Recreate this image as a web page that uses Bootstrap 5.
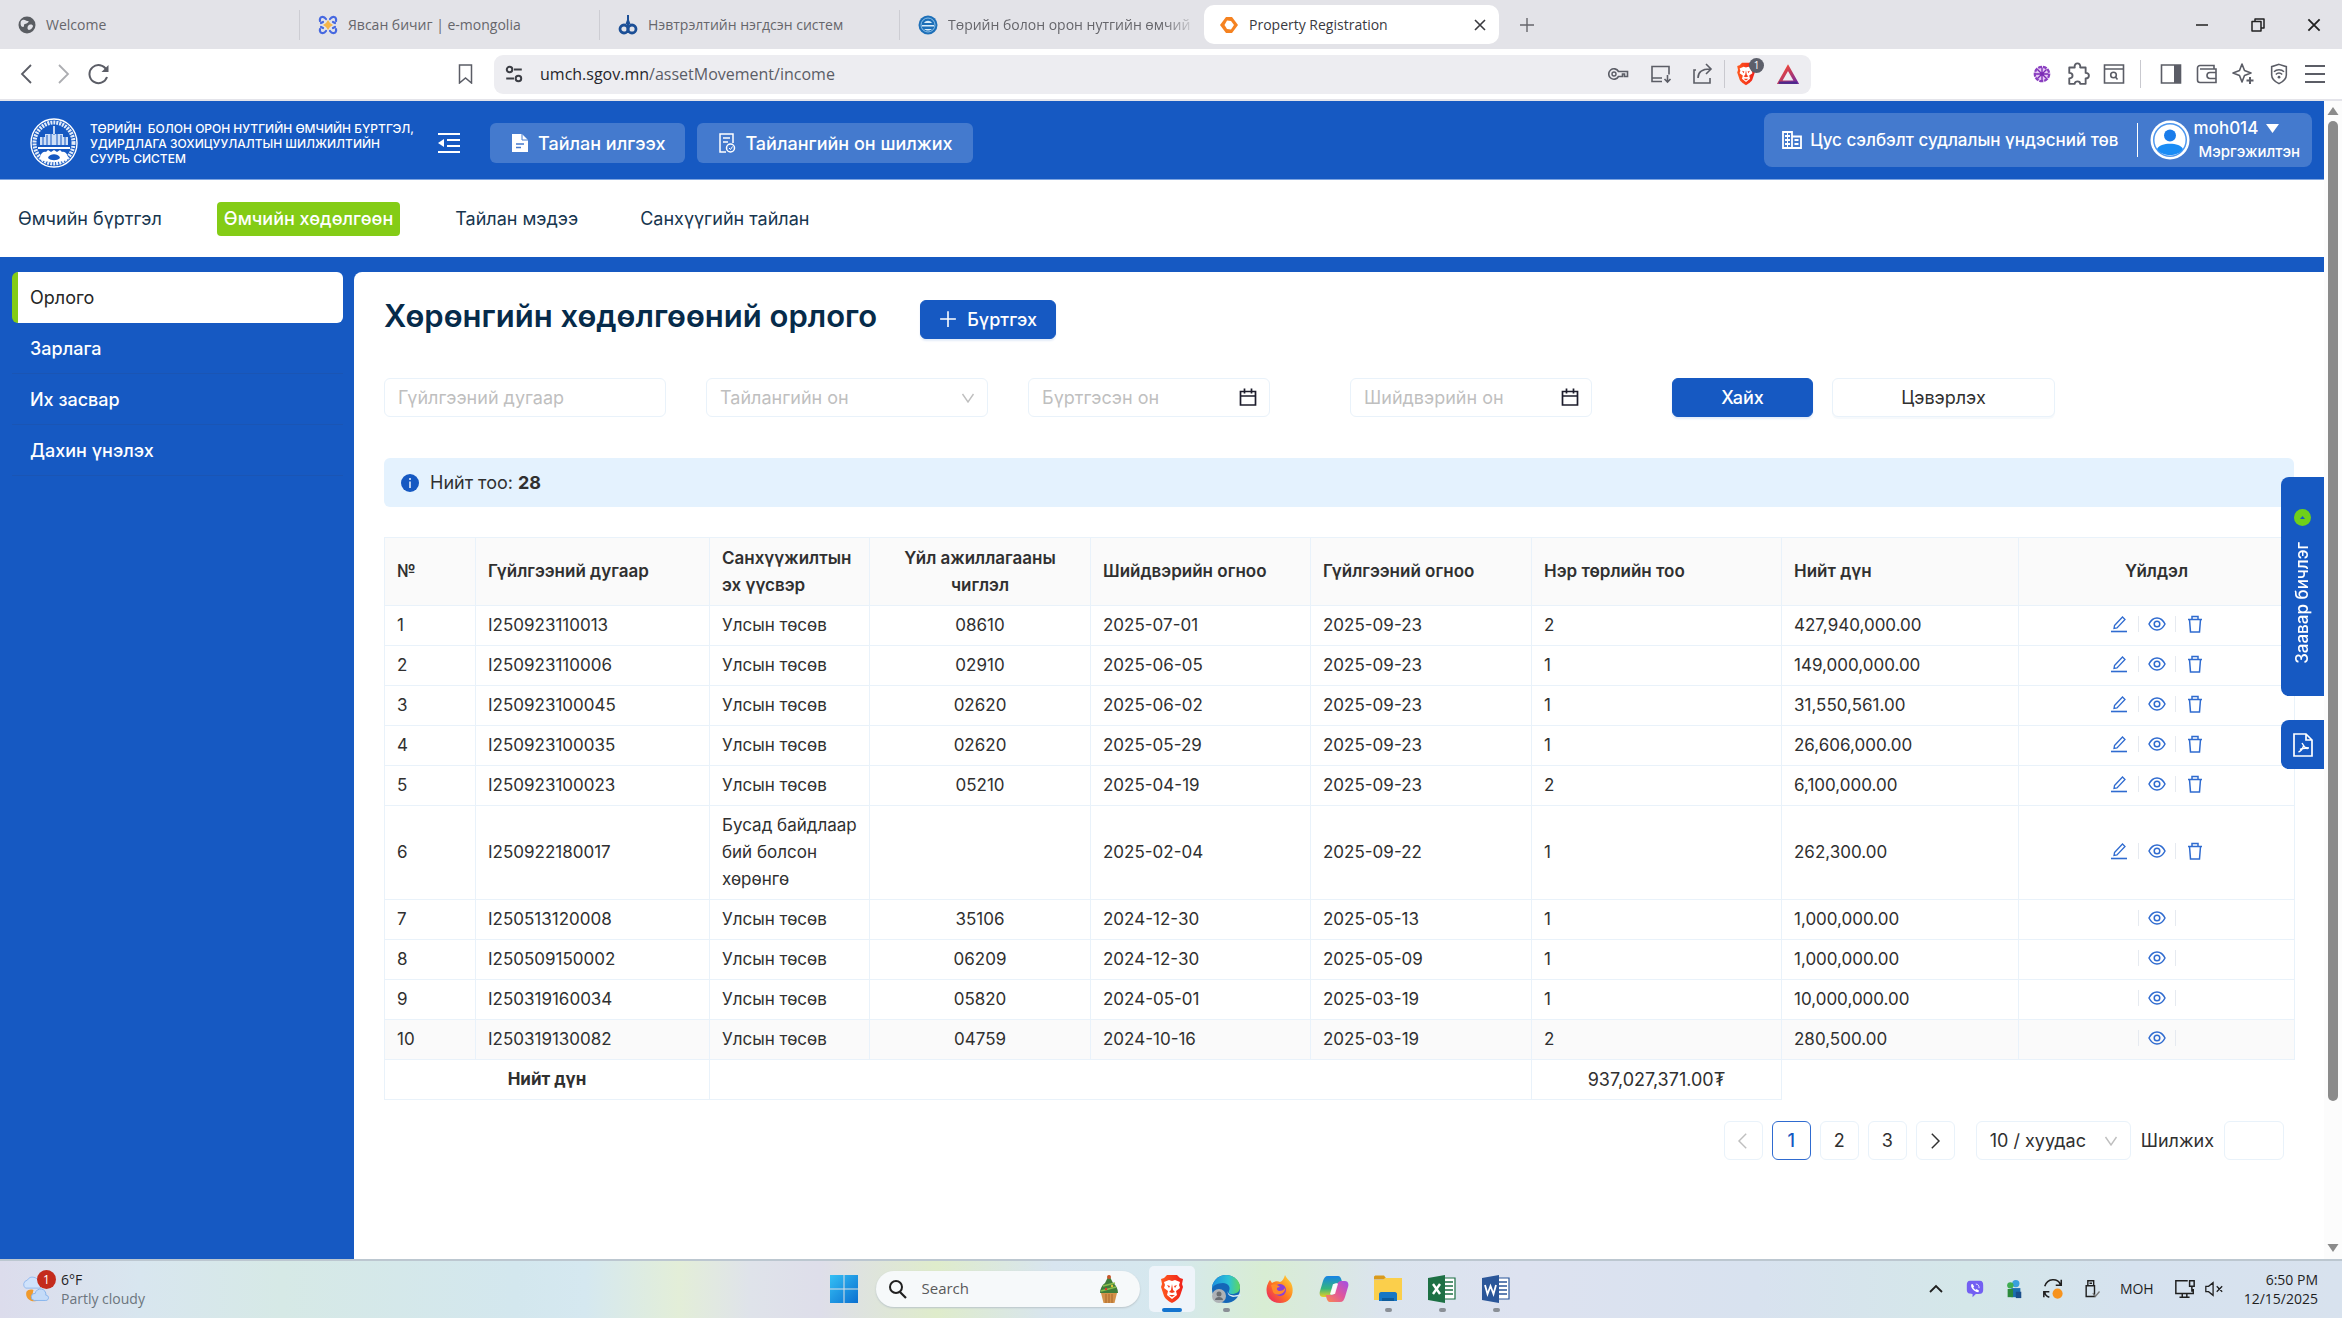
<!DOCTYPE html>
<html lang="mn">
<head>
<meta charset="utf-8">
<meta name="viewport" content="width=device-width, initial-scale=1">
<title>Property Registration</title>
<link href="https://cdn.jsdelivr.net/npm/bootstrap@5.3.0/dist/css/bootstrap.min.css" rel="stylesheet">
<style>
:root{--brand:#1659c2;--line:#e9f2fa;--lime:#84cc16;--os:"Open Sans","Noto Sans",sans-serif}
body{font-family:Inter,"Noto Sans",sans-serif;font-size:17px;line-height:27px;color:#303030;background:#fff;overflow:hidden}
svg{display:block;flex:none}
a{text-decoration:none;color:inherit}
.i16{width:16px;height:16px}.i18{width:18px;height:18px}.i20{width:20px;height:20px}.i22{width:22px;height:22px}.i24{width:24px;height:24px}.i30{width:30px;height:30px}
.plain{border:0;background:none;padding:0;color:inherit;display:flex;align-items:center;justify-content:center}
/* browser frame */
.tabstrip{height:49px;background:#e3e3e8;font-family:var(--os);font-size:14px;color:#66666b}
.tabitem{width:300px;height:30px;padding-left:18px;gap:10px;position:relative;border-right:1px solid #cdcdd3;white-space:nowrap}
.tabitem.nosep{border-right:0}
.tabitem.fadeout a{-webkit-mask-image:linear-gradient(90deg,#000 215px,transparent 250px);mask-image:linear-gradient(90deg,#000 215px,transparent 250px)}
.tabitem.current{width:295px;height:39px;background:#fff;border-radius:10px;border:0;color:#3a3a3f;margin-left:4px;padding:0 8px 0 15px}
.winbtn{width:56px;height:48px;color:#222}
.toolbar{height:52px;background:#fff;border-bottom:2px solid #e4e4ea;color:#5b5d66}
.tool-left{width:494px;padding:0 10px 0 9px}
.cell36{width:36px;height:40px}.cell42{width:42px;height:39px}
.tool-right{width:531px;padding-right:9px}
.urlbar{height:39px;background:#ededf1;border-radius:9px;font-family:var(--os);font-size:16px;color:#5b5d66;padding:0 2px 0 10px}
.urlbar b{font-weight:400;color:#26262b}
.vsep{width:1px;height:28px;background:#c9c9cf}
.shieldcount{position:absolute;left:24px;top:3px;width:15px;height:15px;border-radius:8px;background:#5c5f6a;color:#fff;font-size:10px;line-height:15px;text-align:center}
/* application */
.app{background:#fff;min-width:0}
.apphead{height:79px;background:var(--brand);color:#fff;padding:0 12px 0 30px;border-bottom:1px solid #7fa5e0}
.headleft{padding-top:6px}
.brandname{font-size:12px;line-height:15px;font-weight:500;margin-left:12px;width:347px}
.headbtn{height:40px;background:rgba(255,255,255,.2);border:0;border-radius:6px;color:#fff;font-size:18px;font-weight:500;padding:0 20px;gap:8px;display:flex;align-items:center}
.headbtn:first-of-type{margin-left:0}
.headgap{width:29px}
.orgbox{height:54px;background:rgba(255,255,255,.2);border-radius:8px;padding:0 12px 0 18px;font-weight:500}
.orgbox .orgline{width:1px;height:34px;background:#fff;margin:0 12px 0 18px}
.username{font-size:17px;line-height:24px}.userrole{font-size:15px;line-height:24px;padding-left:5px}
.mainnav{height:77px;color:#17364f;padding-left:11px;font-size:18px}
.mainnav a{padding:3px 7px;border-radius:4px;height:34px;line-height:28px}
.mainnav a.current{background:var(--lime);color:#fff;font-weight:500}
.shell{background:var(--brand);padding-top:15px}
.side{width:354px;padding:0 11px 0 12px;color:#fff;font-weight:500;font-size:18px}
.side a{display:block;height:51px;line-height:52px;padding-left:18px;border-bottom:1px solid #1a55b4}
.side a.current{background:#fff;color:#262626;font-weight:400;border:0;border-left:6px solid var(--lime);padding-left:12px;border-radius:6px}
.panel{background:#fff;border-top-left-radius:8px;padding:27px 30px 0;min-width:0;font-size:18px}
.pagetitle{font-size:31px;line-height:34px;font-weight:600;color:#062b4a;margin:0 43px 6px 0}
.btn-brand{--bs-btn-bg:#1659c2;--bs-btn-border-color:#1659c2;--bs-btn-color:#fff;--bs-btn-hover-bg:#0f4cab;--bs-btn-hover-color:#fff;box-shadow:0 2px 2px #e4ecf8}
.btn-quiet{--bs-btn-bg:#fff;--bs-btn-border-color:#e9f2fa;--bs-btn-color:#303030;box-shadow:0 2px 1px #f6f9fc}
.panel .btn{height:39px;padding:0 18px;font-size:18px;line-height:27px;border-radius:6px;font-weight:500}
.panel .btn-quiet{font-weight:400}
.addbtn{gap:10px}
.filters{margin-top:39px}
.panel .form-control,.panel .form-select{height:39px;font-size:18px;line-height:27px;border:1px solid var(--line);border-radius:6px;padding:0 13px;color:#303030;background-color:#fff}
.panel .form-control::placeholder{color:#bfbfbf}
.panel .form-select{background-image:url("data:image/svg+xml,%3Csvg xmlns='http://www.w3.org/2000/svg' viewBox='0 0 14 12'%3E%3Cpath d='M1.500 2l5.500 8 5.500-8' fill='none' stroke='%23bfbfbf' stroke-width='1.400'/%3E%3C/svg%3E");background-size:14px 12px;background-position:right 12px center}
.panel .form-select.ghost{color:#bfbfbf}
.w-field{width:282px}.w-date{width:242px}
.gap-a{margin-left:40px}.gap-b{margin-left:80px}
.w-find{width:141px}.w-clear{width:223px;margin-left:19px}
.calico{position:absolute;right:13px;top:10px;color:#1c1c2b;pointer-events:none}
.countbar{margin-top:41px;height:49px;background:#e4f2fe;border-radius:6px;padding-left:17px;gap:11px}
.ledger{table-layout:fixed;margin:30px 0 0;font-size:17px;color:#303030;--bs-table-color:#303030;--bs-table-border-color:#e9f2fa}
.ledger>:not(caption),.ledger>:not(caption)>*{border:0}
.ledger>:not(caption)>*>*{padding:6px 12px;vertical-align:middle;border:1px solid var(--line)}
.ledger th{font-weight:600;background:#fafafa}
.ledger thead tr{height:68px}
.ledger tfoot>tr>td.void{border-width:1px 0 0 1px}
.ledger tr.hovered>td{background:#fafafa}
.c1{width:91px}.c2{width:234px}.c3{width:160px}.c4{width:221px}.c5{width:220px}.c6{width:221px}.c7{width:250px}.c8{width:237px}.c9{width:276px}
.sumcell{font-size:18px}
.acts{display:flex;justify-content:center;height:26px;align-items:center;color:#2f6bd0;padding-bottom:3px}
.acts .slot{width:38px;display:flex;justify-content:center}
.acts .slot.mid{border-left:1px solid #e6eaf0;border-right:1px solid #e6eaf0;height:16px;align-items:center}
.pager{margin-top:21px;gap:10px;padding-right:10px}
.pager .pagination{gap:10px;margin-right:11px}
.pager .page-link{width:39px;height:39px;padding:0;border:1px solid var(--line);border-radius:6px;color:#303030;display:flex;align-items:center;justify-content:center;font-size:18px;margin:0}
.pager .active .page-link{border-color:#2f6bd0;color:#1659c2;background:#fff;font-weight:500}
.pager .disabled .page-link{color:#bfbfbf;background:#fff}
.panel .w-size{width:155px;padding-right:30px}.w-jump{width:60px}
.guide{position:absolute;right:0;top:220px;width:43px;height:219px;background:var(--brand);border-radius:8px 0 0 8px;color:#fff;font-weight:500;font-size:17px}
.guide span{writing-mode:vertical-rl;transform:rotate(180deg)}
.pdfbtn{position:absolute;right:0;top:463px;width:43px;height:49px;background:var(--brand);border-radius:8px 0 0 8px;color:#fff}
.scroller{flex:none;width:18px;background:#fcfcfc;padding:5px 0}
.scroller .thumb{width:10px;flex:979 0 0;background:#8b8b8b;border-radius:5px}
.scroller .rest{flex:141 0 0}
/* taskbar */
.taskbar{height:59px;border-top:2px solid #bcc7d0;padding-bottom:2px;font-family:var(--os);font-size:14px;line-height:19px;color:#1f1f1f;background:linear-gradient(90deg,#dcdcec 0,#d8e6ef 6%,#d6e9e6 12%,#d3e7ee 22%,#d5e8f0 25%,#e3eed8 29%,#dfe3ea 32%,#dedeea 35%,#dfeccb 40%,#d8e5f0 45%,#d5e8ee 50%,#d8edd3 54%,#dbe4ee 59%,#dde2f0 65%,#d8e2ef 75%,#d4e7e9 84%,#d6e2ef 91%,#d8e2ee 100%)}
.weather,.tray{flex:1 1 0}
.weather{padding-left:22px;gap:9px}
.alertdot{position:absolute;left:15px;top:-4px;width:19px;height:19px;border-radius:10px;background:#c42b1c;color:#fff;text-align:center;font-size:12px}
.dock{flex:none;padding-left:16px}
.searchpill{width:264px;height:36px;border-radius:18px;background:#f6f9fa;box-shadow:0 1px 2px #b9c4c9;padding:0 20px 0 12px;gap:12px;margin-left:18px;margin-right:9px}
.searchpill input{border:0;background:none;font-size:15px;width:150px;outline:0}
.searchpill input::placeholder{color:#5a5a5a}
.appbtn{width:46px;height:46px;position:relative;margin-right:8px;border-radius:5px}
.appbtn.front{background:#eef4fa}
.appbtn::after{content:"";position:absolute;left:20px;bottom:0;width:7px;height:4px;border-radius:2px;background:#8a8f96}
.appbtn.front::after{left:13px;width:20px;background:#1374cf}
.appbtn.idle::after{display:none}
.excel{color:#1d7044}.word{color:#2a5699}
.tray{padding-right:24px}
.tray .cell{width:39px;display:flex;justify-content:center}
.langtag{margin:0 20px 0 8px}.muteico{margin-right:20px}
</style>
</head>
<body class="d-flex flex-column vh-100">
<svg width="0" height="0" class="position-absolute" aria-hidden="true">
<defs>
<linearGradient id="gWin" x1="0" y1="0" x2="1" y2="1"><stop offset="0" stop-color="#35c0f5"/><stop offset="1" stop-color="#0a6fd0"/></linearGradient>
<linearGradient id="gBrave" x1="0" y1="0" x2="1" y2="0"><stop offset="0" stop-color="#ff5a1f"/><stop offset="1" stop-color="#f0201a"/></linearGradient>
<linearGradient id="gEdge" x1="0" y1="0" x2="1" y2="0"><stop offset="0" stop-color="#1b8fe0"/><stop offset=".6" stop-color="#2cc3d5"/><stop offset="1" stop-color="#5fd65c"/></linearGradient>
<linearGradient id="gFox" x1="1" y1="0" x2="0" y2="1"><stop offset="0" stop-color="#ffe03a"/><stop offset=".5" stop-color="#ff7a1e"/><stop offset="1" stop-color="#e8186e"/></linearGradient>
<linearGradient id="gCop" x1="0" y1="0" x2="0" y2="1"><stop offset="0" stop-color="#1683e6"/><stop offset=".6" stop-color="#35b57e"/><stop offset="1" stop-color="#e8d122"/></linearGradient>
<linearGradient id="gCop2" x1="1" y1="0" x2="0" y2="1"><stop offset="0" stop-color="#a04fe8"/><stop offset=".5" stop-color="#e0559c"/><stop offset="1" stop-color="#fb8c4c"/></linearGradient>
<linearGradient id="gTri" x1="0" y1="0" x2="1" y2="1"><stop offset="0" stop-color="#ff4a2a"/><stop offset="1" stop-color="#7a2a9c"/></linearGradient>
</defs>
<symbol id="globe" viewBox="0 0 18 18"><circle cx="9" cy="9" r="8.500" fill="#5a5d62"/><path d="M3 5c3-3 5 0 7 0s-1 3-3 3 0 3-2 3-3-3-2-6zm8 4c2-1 4 0 4 1s-2 4-4 4-2-4 0-5z" fill="#e3e3e8"/></symbol>
<symbol id="emon" viewBox="0 0 20 20"><g fill="none" stroke="#4668e0" stroke-width="2.200" stroke-linecap="round"><path d="M2 6c-1-5 4-5 6-2M12 4c2-3 7-3 6 2M2 14c-1 5 4 5 6 2M12 16c2 3 7 3 6-2"/><path d="M3 8l2-1M17 8l-2-1M3 12l2 1M17 12l-2 1"/></g><path d="M10 5l2 3 3 2-3 2-2 3-2-3-3-2 3-2z" fill="#f5b54a"/></symbol>
<symbol id="nevt" viewBox="0 0 20 20"><path d="M9 0h2v5l1.500 4h-5L9 5z" fill="#1c4f96"/><g fill="none" stroke="#1c4f96" stroke-width="2.800"><circle cx="6" cy="14" r="4"/><circle cx="14" cy="14" r="4"/></g><path d="M10 8v10" stroke="#1c4f96" stroke-width="2"/></symbol>
<symbol id="torii" viewBox="0 0 20 20"><circle cx="10" cy="10" r="9.500" fill="#1d6fb8"/><circle cx="10" cy="10" r="7" fill="none" stroke="#8cc0e8"/><path d="M6 8c2-3 6-3 8 0zM4 10h12v1.500H4zM6 14c3 2 5 2 8 0z" fill="#d8ecfa"/></symbol>
<symbol id="prop" viewBox="0 0 20 16"><path d="M7 0h6l6 8-6 8H7L1 8z" fill="#f58220"/><path d="M8 3.500l4 .5 3 4-3 4.500-4-.5L5.500 8z" fill="#fff"/></symbol>
<symbol id="xmark" viewBox="0 0 16 16"><path d="M3 3l10 10M13 3L3 13" stroke="currentColor" stroke-width="1.600"/></symbol>
<symbol id="plus" viewBox="0 0 16 16"><path d="M8 1v14M1 8h14" stroke="currentColor" stroke-width="1.400"/></symbol>
<symbol id="back" viewBox="0 0 20 20"><path d="M14 1L5 10l9 9" fill="none" stroke="currentColor" stroke-width="1.800"/></symbol>
<symbol id="fwd" viewBox="0 0 20 20"><path d="M6 1l9 9-9 9" fill="none" stroke="currentColor" stroke-width="1.800"/></symbol>
<symbol id="reload" viewBox="0 0 22 22"><path d="M19 14A9 9 0 1 1 18.500 7" fill="none" stroke="currentColor" stroke-width="2"/><path d="M20.500 2v7h-7z" fill="currentColor"/></symbol>
<symbol id="mark-book" viewBox="0 0 20 20"><path d="M3.500 1h12v18L9.500 14l-6 5z" fill="none" stroke="currentColor" stroke-width="1.500"/></symbol>
<symbol id="tune" viewBox="0 0 18 18"><g fill="none" stroke="#3c3e45" stroke-width="1.800"><circle cx="5" cy="5" r="2.500"/><path d="M9 5h7M2 13h7"/><circle cx="13" cy="13" r="2.500"/></g></symbol>
<symbol id="keyico" viewBox="0 0 22 22"><path d="M10.500 8.500h9v5h-3V11h-2v2.500h-4A5.200 5.200 0 1 1 10.500 8.500z" fill="none" stroke="currentColor" stroke-width="1.600"/><circle cx="6" cy="11" r="2" fill="none" stroke="currentColor" stroke-width="1.400"/></symbol>
<symbol id="install" viewBox="0 0 22 22"><path d="M12 18.500H2v-15h17v8M2 15h10M17.500 12v7M14.500 16l3 3 3-3" fill="none" stroke="currentColor" stroke-width="1.600"/></symbol>
<symbol id="share" viewBox="0 0 22 22"><path d="M4 7H2v13h16v-5M6 15c0-6 4-9 12-9M14 1l5 5-5 5" fill="none" stroke="currentColor" stroke-width="1.600"/></symbol>
<symbol id="brave" viewBox="0 0 26 30"><path d="M8 1h10l3 3 3 1-1 5 1 3-3 9c-1 3-6 6-8 7-2-1-7-4-8-7L2 13l1-3-1-5 3-1z" fill="url(#gBrave)"/><path d="M13 7l3-1 5 2-1 3 1 3-4 3 1 4-5 4-5-4 1-4-4-3 1-3-1-3 5-2z" fill="#fff"/><path d="M8 11l3 1-1 2zm10 0l-3 1 1 2zM13 10l1 6 2 2-3 1-3-1 2-2zm-3 11h6l-3 2z" fill="#f53d1c"/></symbol>
<symbol id="tri" viewBox="0 0 24 22"><path d="M12 4L21 20H3z" fill="none" stroke="url(#gTri)" stroke-width="3.600"/><path d="M2 20.500h20" stroke="#4b2a8c" stroke-width="2.500"/></symbol>
<symbol id="flower" viewBox="0 0 20 20"><circle cx="10" cy="10" r="8" fill="#e7c9f5" stroke="#8a3fc0" stroke-width="2.500" stroke-dasharray="4.500 1"/><path d="M10 3v14M3 10h14M5 5l10 10M15 5L5 15" stroke="#7a2bb5" stroke-width="1.500"/></symbol>
<symbol id="puzzle" viewBox="0 0 22 22"><path d="M3 5h5c-1-5 6-5 5 0h5v5c4 0 4 5 0 5v5h-5c0-3-5-3-5 0H3v-5c4 0 4-5 0-5z" fill="none" stroke="currentColor" stroke-width="1.700" stroke-linejoin="round"/></symbol>
<symbol id="boxfind" viewBox="0 0 22 22"><path d="M1.500 2h19v18h-19zM1.500 6h19" fill="none" stroke="currentColor" stroke-width="1.600"/><circle cx="10.500" cy="12" r="2.800" fill="none" stroke="currentColor" stroke-width="1.600"/><path d="M12.500 14l2 2.500" stroke="currentColor" stroke-width="1.600"/></symbol>
<symbol id="sidepane" viewBox="0 0 22 22"><path d="M1.500 2h19v18h-19z" fill="none" stroke="currentColor" stroke-width="1.600"/><path d="M14 2h6.500v18H14z" fill="currentColor"/></symbol>
<symbol id="wallet" viewBox="0 0 22 22"><path d="M18 6V2.500H4a2.500 2.500 0 0 0-2.500 2.500v12A2.500 2.500 0 0 0 4 19.500h16V6H4M20 9.500h-6a3 3 0 0 0 0 6h6" fill="none" stroke="currentColor" stroke-width="1.600"/></symbol>
<symbol id="spark" viewBox="0 0 22 22"><path d="M10 1l2.500 6.500L19 10l-6.500 2.500L10 19l-2.500-6.500L1 10l6.500-2.500z" fill="none" stroke="currentColor" stroke-width="1.600" stroke-linejoin="round"/><path d="M18 14v7M14.500 17.500h7" stroke="currentColor" stroke-width="2"/></symbol>
<symbol id="vpn" viewBox="0 0 22 24"><path d="M11 1.500l8 2.500v9c0 5-5 8-8 9.500-3-1.500-8-4.500-8-9.500V4z" fill="none" stroke="currentColor" stroke-width="1.700"/><path d="M5.500 9.500c3-3 8-3 11 0M7.500 12.500c2-2 5-2 7 0" fill="none" stroke="currentColor" stroke-width="1.600"/><circle cx="11" cy="15.500" r="1.500" fill="currentColor"/></symbol>
<symbol id="burger" viewBox="0 0 22 22"><path d="M1 3h20M1 11h20M1 19h20" stroke="currentColor" stroke-width="2"/></symbol>
<symbol id="wmin" viewBox="0 0 16 16"><path d="M2 8h12" stroke="currentColor" stroke-width="1.500"/></symbol>
<symbol id="wmax" viewBox="0 0 16 16"><path d="M2 4.500h9V14H2zM5 4.500V2h9v9h-3" fill="none" stroke="currentColor" stroke-width="1.500" stroke-linejoin="round"/></symbol>
<symbol id="seal" viewBox="0 0 48 50"><ellipse cx="24" cy="25" rx="23" ry="24" fill="none" stroke="#fff" stroke-width="1.400"/><ellipse cx="24" cy="25" rx="19.500" ry="20.500" fill="none" stroke="#e3ecf9" stroke-width="4" stroke-dasharray="2 1"/><path d="M10 27h28v-8h-5v-3H15v3h-5z" fill="#cfe0f7"/><path d="M13 19v8M17 17v10M21 16v11M27 16v11M31 17v10M35 19v8M24 9v8" stroke="#1659c2"/><path d="M24 8v8" stroke="#fff" stroke-width="1.500"/><path d="M8 29h32v2H8z" fill="#fff"/><path d="M10 41c0-5 3-8 6-7l2-2 3 2 3-2 3 2 3-2 2 2c3-1 6 2 6 7-4 4-24 4-28 0z" fill="#fff"/><path d="M18 40c1-5 11-5 12 0-3 3-9 3-12 0z" fill="#1659c2"/></symbol>
<symbol id="fold" viewBox="0 0 24 22"><path d="M1 2h22M10 8h13M10 14h13M1 20h22" stroke="currentColor" stroke-width="2"/><path d="M1 11l6-4v8z" fill="currentColor"/></symbol>
<symbol id="docfill" viewBox="0 0 18 20"><path d="M1 1h10l6 6v12H1z" fill="currentColor"/><path d="M11 1v6h6" fill="none" stroke="#447acd"/><path d="M5 11h8M5 14.500h5" stroke="#447acd" stroke-width="1.500"/></symbol>
<symbol id="docline" viewBox="0 0 18 20"><path d="M8 19H2V1h13v9M5 5h7M5 9h5" fill="none" stroke="currentColor" stroke-width="1.500"/><circle cx="12.500" cy="15" r="4" fill="none" stroke="currentColor" stroke-width="1.500"/><path d="M11 15l1.500 1.500 2-3" fill="none" stroke="currentColor"/></symbol>
<symbol id="building" viewBox="0 0 20 18"><path d="M1 1h9v16H1zM10 5.500h9V17h-9M3 5h5M3 9h5M3 13h5M12.500 9h4M12.500 13h4" fill="none" stroke="currentColor" stroke-width="1.800"/><path d="M5.500 1v16" stroke="currentColor"/></symbol>
<symbol id="avatar" viewBox="0 0 40 40"><circle cx="20" cy="20" r="19.500" fill="#fff"/><circle cx="20" cy="20" r="17" fill="#4c96ee"/><circle cx="20" cy="20" r="15.500" fill="#fff"/><circle cx="20" cy="15.500" r="6" fill="#1a7cea"/><path d="M7 29c3-7 23-7 26 0-5 8-21 8-26 0z" fill="#1a8cf5"/></symbol>
<symbol id="cal" viewBox="0 0 18 18"><path d="M1.500 3.500h15V17h-15zM1.500 8h15M5.500 0.500v5M12.500 0.500v5" fill="none" stroke="currentColor" stroke-width="1.700"/></symbol>
<symbol id="info" viewBox="0 0 18 18"><circle cx="9" cy="9" r="9" fill="#1659c2"/><path d="M9 7.500V14M9 4v2" stroke="#fff" stroke-width="1.400"/></symbol>
<symbol id="pen" viewBox="0 0 18 18"><path d="M1 16.500h16" stroke="currentColor" stroke-width="1.600"/><path d="M4.500 10.500l8-8.500 2.500 2.500-8 8.500-3 .500z" fill="none" stroke="currentColor" stroke-width="1.300"/></symbol>
<symbol id="eye" viewBox="0 0 18 18"><path d="M1 9c4-8 12-8 16 0-4 8-12 8-16 0z" fill="none" stroke="currentColor" stroke-width="1.500"/><circle cx="9" cy="9" r="2.800" fill="none" stroke="currentColor" stroke-width="1.500"/></symbol>
<symbol id="bin" viewBox="0 0 18 18"><path d="M2 4.500h14M3.500 4.500L4.500 17h9l1-12.500M6 4V1.500h6V4" fill="none" stroke="currentColor" stroke-width="1.500"/></symbol>
<symbol id="pdf" viewBox="0 0 20 24"><path d="M1 1h12l6 6v16H1zM13 1v6h6" fill="none" stroke="currentColor" stroke-width="1.700"/><path d="M9 10c3 5 3 5 7 5M10.500 13c-1 3-2 5-5 6M7 16.500c2-1 5-1.500 8-1" fill="none" stroke="currentColor" stroke-width="1.400"/></symbol>
<symbol id="cloud" viewBox="0 0 34 34"><path d="M4 16a5 5 0 0 1 2-9 7 7 0 0 1 13 3c4 0 4 6 0 6z" fill="#cfe2fb" stroke="#8db6ee"/><path d="M5 20c-2 8 6 13 14 10-6-1-8-6-6-12-4-1-6 0-8 2z" fill="#f09a2c"/><path d="M14 30a4 4 0 0 1 1-8 6 6 0 0 1 12 2c4 0 4 6 0 6z" fill="#c4dbf8" stroke="#7fb0ec"/></symbol>
<symbol id="win" viewBox="0 0 28 28"><path d="M0 0h13.500v13.500H0zM14.500 0H28v13.500H14.500zM0 14.500h13.500V28H0zM14.500 14.500H28V28H14.500z" fill="url(#gWin)"/></symbol>
<symbol id="lens" viewBox="0 0 20 20"><circle cx="8" cy="8" r="6" fill="none" stroke="currentColor" stroke-width="2"/><path d="M12 13l6 6" stroke="currentColor" stroke-width="2.200"/></symbol>
<symbol id="cupcake" viewBox="0 0 22 30"><path d="M11 1l4 8c3 2 5 6 5 10H2c0-4 2-8 5-10z" fill="#3f7d3a"/><path d="M5 12l12-3M3 17l15-4" stroke="#8bbf4c" stroke-width="1.500"/><circle cx="8" cy="15" r="1.200" fill="#d93a2a"/><circle cx="14" cy="12" r="1.200" fill="#e8c33a"/><circle cx="11" cy="3" r="2" fill="#c8572a"/><path d="M3 19h16l-2.500 10h-11z" fill="#d4924a"/><path d="M8 20v9M11 20v9M14 20v9" stroke="#a8662a"/></symbol>
<symbol id="edge" viewBox="0 0 30 30"><circle cx="15" cy="15" r="14" fill="#1467b8"/><path d="M1 14C2 5 9 1 15 1c8 0 14 6 14 12 0 5-4 7-8 7-3 0-4-1-3-3 2-4-1-8-6-8-6 0-10 3-11 5z" fill="url(#gEdge)"/><path d="M17 17c-1 4 6 6 12 3l1 2-8 1c-4-1-6-3-5-6z" fill="#dcebf5"/><circle cx="8" cy="22" r="7" fill="#aeb2b6"/><circle cx="8" cy="20" r="2.500" fill="#6a6e72"/><path d="M4 26c0-4 8-4 8 0z" fill="#6a6e72"/></symbol>
<symbol id="fox" viewBox="0 0 30 30"><path d="M20 1c1 3 4 5 6 8 4 8 1 20-11 20C4 29 0 20 2 12c1-3 2-5 3-6l2 3c3-2 6-2 8-1 3-1 4-4 5-7z" fill="url(#gFox)"/><circle cx="15" cy="16" r="6" fill="#8a3fd8"/><path d="M6 11c4-2 7 0 9 2-4 0-4 3-1 4 3 0 5-1 6-3 1 6-9 9-12 4z" fill="#ff8a2a"/></symbol>
<symbol id="copilot" viewBox="0 0 30 30"><path d="M9 2h10c2 0 3 2 3.500 4l1 3h-6c-2 0-3 1-3.500 3l-2 7c-1 3-2 4-4 4H4c-3 0-4-3-3-6L4 7c1-3 2-5 5-5z" fill="url(#gCop)"/><path d="M21 28H11c-2 0-3-2-3.500-4l-1-3h6c2 0 3-1 3.500-3l2-7c1-3 2-4 4-4h4c3 0 4 3 3 6l-3 10c-1 3-2 5-5 5z" fill="url(#gCop2)"/><path d="M14 10h5l-3 10h-5z" fill="#fff" opacity=".85"/></symbol>
<symbol id="folder" viewBox="0 0 30 30"><path d="M1 3c0-1 1-1.500 2-1.500h8l3 4H1z" fill="#d99a1c"/><path d="M1 6h9l2-2h17v22H1z" fill="#fbcf4b"/><path d="M6 27v-7c0-1 1-2 2-2h14c1 0 2 1 2 2v7z" fill="#1877c4"/><path d="M9 24h12v3H9z" fill="#0e5c9c"/></symbol>
<symbol id="sheetbase" viewBox="0 0 30 30"><path d="M17 4h11v21H17z" fill="#fff" stroke="currentColor" stroke-width="1.200"/><path d="M18 8h8M18 12h8M18 16h8M18 20h8" stroke="currentColor" stroke-width="1.700"/><path d="M1 4l17-3v28L1 26z" fill="currentColor"/></symbol>
<symbol id="viber" viewBox="0 0 22 22"><path d="M5 1h12c3 0 4 2 4 5v6c0 4-2 5-5 5h-4l-4 4v-4c-5 0-7-1-7-5V6c0-3 1-5 4-5z" fill="#7360f2"/><path d="M7 5c-3 3 3 10 8 10l1-2-3-2-1 1c-1 0-3-2-3-3l1-1-2-3z" fill="#fff"/><path d="M12 5c3 0 4 2 4 5" fill="none" stroke="#fff"/></symbol>
<symbol id="people" viewBox="0 0 20 22"><circle cx="12" cy="5" r="4" fill="#3aa0dc"/><circle cx="6" cy="7" r="3.500" fill="#3fae52"/><path d="M7 10h10v10H7z" fill="#1c6fb0"/><path d="M3 11h6v9H3z" fill="#2c8a3c"/><path d="M12 14h6v7h-6z" fill="#1b4f8c"/></symbol>
<symbol id="sync" viewBox="0 0 24 24"><path d="M3 9c3-9 14-9 17-2M21 2v6h-6M8 21c-3-1-5-3-5-6M2 21v-6h6" fill="none" stroke="#1f1f1f" stroke-width="1.700"/><circle cx="17" cy="17" r="5.500" fill="#f7931e"/></symbol>
<symbol id="usb" viewBox="0 0 22 24"><path d="M4 8h10v13H4zM6 8V2h7v6M8 5h3" fill="none" stroke="#1f1f1f" stroke-width="1.700"/><path d="M12 17l3 4 5-6" fill="none" stroke="#777" stroke-width="1.500"/></symbol>
<symbol id="monitor" viewBox="0 0 24 24"><path d="M15 3H2v14h19v-5M6 21h11M9 17v4M14 17v4M17 3h5v6h-5zM19.500 9v6" fill="none" stroke="#1f1f1f" stroke-width="1.600"/></symbol>
<symbol id="mute" viewBox="0 0 22 22"><path d="M2 8h3l5-4v14l-5-4H2zM14 8l6 6M20 8l-6 6" fill="none" stroke="#1f1f1f" stroke-width="1.400"/></symbol>
<symbol id="up" viewBox="0 0 16 16"><path d="M2 11l6-6 6 6" fill="none" stroke="currentColor" stroke-width="1.800"/></symbol>
</svg>

<header>
  <div class="tabstrip d-flex align-items-center">
    <div class="tabitem d-flex align-items-center"><svg class="i18"><use href="#globe"/></svg><a href="#">Welcome</a></div>
    <div class="tabitem d-flex align-items-center"><svg class="i20"><use href="#emon"/></svg><a href="#">Явсан бичиг | e-mongolia</a></div>
    <div class="tabitem d-flex align-items-center"><svg class="i20"><use href="#nevt"/></svg><a href="#">Нэвтрэлтийн нэгдсэн систем</a></div>
    <div class="tabitem nosep fadeout d-flex align-items-center"><svg class="i20"><use href="#torii"/></svg><a href="#">Төрийн болон орон нутгийн өмчий</a></div>
    <div class="tabitem current d-flex align-items-center"><svg class="i20"><use href="#prop"/></svg><a href="#" class="me-auto">Property Registration</a><button class="plain i22" aria-label="Close tab"><svg class="i16"><use href="#xmark"/></svg></button></div>
    <button class="plain i24 ms-3" aria-label="New tab"><svg class="i16"><use href="#plus"/></svg></button>
    <div class="d-flex ms-auto">
      <button class="plain winbtn" aria-label="Minimize"><svg class="i16"><use href="#wmin"/></svg></button>
      <button class="plain winbtn" aria-label="Restore"><svg class="i16"><use href="#wmax"/></svg></button>
      <button class="plain winbtn" aria-label="Close"><svg class="i18"><use href="#xmark"/></svg></button>
    </div>
  </div>
  <div class="toolbar d-flex align-items-center">
    <div class="tool-left d-flex">
      <button class="plain cell36" aria-label="Back"><svg class="i20"><use href="#back"/></svg></button>
      <button class="plain cell36 opacity-50" aria-label="Forward"><svg class="i20"><use href="#fwd"/></svg></button>
      <button class="plain cell36" aria-label="Reload"><svg class="i22"><use href="#reload"/></svg></button>
      <button class="plain cell36 ms-auto" aria-label="Bookmark"><svg class="i20"><use href="#mark-book"/></svg></button>
    </div>
    <div class="urlbar d-flex align-items-center flex-grow-1">
      <svg class="i20 me-3"><use href="#tune"/></svg><span class="me-auto"><b>umch.sgov.mn</b>/assetMovement/income</span>
      <button class="plain cell42" aria-label="Passwords"><svg class="i22"><use href="#keyico"/></svg></button>
      <button class="plain cell42" aria-label="Install"><svg class="i22"><use href="#install"/></svg></button>
      <button class="plain cell42" aria-label="Share"><svg class="i22"><use href="#share"/></svg></button>
      <span class="vsep"></span>
      <button class="plain cell42 position-relative" aria-label="Shields"><svg class="i24"><use href="#brave"/></svg><span class="shieldcount">1</span></button>
      <button class="plain cell42" aria-label="Rewards"><svg class="i22"><use href="#tri"/></svg></button>
    </div>
    <div class="tool-right d-flex align-items-center justify-content-end">
      <button class="plain cell36" aria-label="Extension"><svg class="i18"><use href="#flower"/></svg></button>
      <button class="plain cell36" aria-label="Extensions"><svg class="i24"><use href="#puzzle"/></svg></button>
      <button class="plain cell36 me-2" aria-label="Find"><svg class="i22"><use href="#boxfind"/></svg></button>
      <span class="vsep me-2"></span>
      <button class="plain cell36 ms-1" aria-label="Side panel"><svg class="i22"><use href="#sidepane"/></svg></button>
      <button class="plain cell36" aria-label="Wallet"><svg class="i22"><use href="#wallet"/></svg></button>
      <button class="plain cell36" aria-label="Assistant"><svg class="i22"><use href="#spark"/></svg></button>
      <button class="plain cell36" aria-label="VPN"><svg class="i22"><use href="#vpn"/></svg></button>
      <button class="plain cell36" aria-label="Menu"><svg class="i22"><use href="#burger"/></svg></button>
    </div>
  </div>
</header>

<div class="d-flex flex-grow-1">
<div class="app d-flex flex-column flex-grow-1">
  <div class="apphead d-flex align-items-center justify-content-between">
    <div class="headleft d-flex align-items-center">
      <svg width="48" height="50"><use href="#seal"/></svg>
      <div class="brandname">ТӨРИЙН&nbsp; БОЛОН ОРОН НУТГИЙН ӨМЧИЙН БҮРТГЭЛ,<br>УДИРДЛАГА ЗОХИЦУУЛАЛТЫН ШИЛЖИЛТИЙН<br>СУУРЬ СИСТЕМ</div>
      <button class="plain" aria-label="Цэс"><svg width="24" height="22"><use href="#fold"/></svg></button>
      <span class="headgap"></span>
      <button class="headbtn me-2"><svg class="i20"><use href="#docfill"/></svg>Тайлан илгээх</button>
      <button class="headbtn ms-1"><svg class="i20"><use href="#docline"/></svg>Тайлангийн он шилжих</button>
    </div>
    <div class="orgbox d-flex align-items-center">
      <svg class="i20 me-2"><use href="#building"/></svg><span>Цус сэлбэлт судлалын үндэсний төв</span>
      <span class="orgline"></span>
      <svg width="40" height="40"><use href="#avatar"/></svg>
      <div class="ms-1"><div class="username d-flex align-items-center">moh014<svg class="ms-2" width="13" height="9" viewBox="0 0 13 9"><path d="M0 0h13L6.500 9z" fill="#fff"/></svg></div><div class="userrole">Мэргэжилтэн</div></div>
    </div>
  </div>
  <nav class="mainnav d-flex align-items-center">
    <a href="#" class="me-5">Өмчийн бүртгэл</a><a href="#" class="current me-5">Өмчийн хөдөлгөөн</a><a href="#" class="me-5">Тайлан мэдээ</a><a href="#">Санхүүгийн тайлан</a>
  </nav>
  <div class="shell d-flex flex-grow-1 position-relative">
    <nav class="side flex-shrink-0">
      <a href="#" class="current">Орлого</a><a href="#">Зарлага</a><a href="#">Их засвар</a><a href="#">Дахин үнэлэх</a>
    </nav>
    <main class="panel flex-grow-1">
      <div class="d-flex align-items-center">
        <h1 class="pagetitle">Хөрөнгийн хөдөлгөөний орлого</h1>
        <button class="btn btn-brand addbtn d-flex align-items-center"><svg class="i18"><use href="#plus"/></svg>Бүртгэх</button>
      </div>
      <form class="filters d-flex align-items-center">
        <input class="form-control w-field" placeholder="Гүйлгээний дугаар" aria-label="Гүйлгээний дугаар">
        <select class="form-select ghost w-field gap-a" aria-label="Тайлангийн он"><option>Тайлангийн он</option></select>
        <div class="position-relative w-date gap-a"><input class="form-control" placeholder="Бүртгэсэн он" aria-label="Бүртгэсэн он"><svg class="i18 calico"><use href="#cal"/></svg></div>
        <div class="position-relative w-date gap-b"><input class="form-control" placeholder="Шийдвэрийн он" aria-label="Шийдвэрийн он"><svg class="i18 calico"><use href="#cal"/></svg></div>
        <button type="button" class="btn btn-brand w-find gap-b">Хайх</button>
        <button type="reset" class="btn btn-quiet w-clear">Цэвэрлэх</button>
      </form>
      <div class="countbar d-flex align-items-center"><svg class="i18"><use href="#info"/></svg><span>Нийт тоо: <strong>28</strong></span></div>
      <table class="table table-bordered ledger">
        <colgroup><col class="c1"><col class="c2"><col class="c3"><col class="c4"><col class="c5"><col class="c6"><col class="c7"><col class="c8"><col class="c9"></colgroup>
        <thead><tr><th>№</th><th>Гүйлгээний дугаар</th><th>Санхүүжилтын эх үүсвэр</th><th class="text-center">Үйл ажиллагааны чиглэл</th><th>Шийдвэрийн огноо</th><th>Гүйлгээний огноо</th><th>Нэр төрлийн тоо</th><th>Нийт дүн</th><th class="text-center">Үйлдэл</th></tr></thead>
        <tbody id="rows"></tbody>
        <tfoot><tr><td colspan="2" class="text-center"><strong>Нийт дүн</strong></td><td colspan="4"></td><td class="text-center sumcell">937,027,371.00₮</td><td colspan="2" class="void"></td></tr></tfoot>
      </table>
      <div class="pager d-flex align-items-center justify-content-end">
        <ul class="pagination mb-0">
          <li class="page-item disabled"><a class="page-link" href="#" aria-label="Өмнөх"><svg class="i16"><use href="#back"/></svg></a></li>
          <li class="page-item active"><a class="page-link" href="#">1</a></li>
          <li class="page-item"><a class="page-link" href="#">2</a></li>
          <li class="page-item"><a class="page-link" href="#">3</a></li>
          <li class="page-item"><a class="page-link" href="#" aria-label="Дараах"><svg class="i16"><use href="#fwd"/></svg></a></li>
        </ul>
        <select class="form-select w-size" aria-label="Хуудасны хэмжээ"><option>10 / хуудас</option></select>
        <label for="jump">Шилжих</label><input id="jump" class="form-control w-jump">
      </div>
    </main>
    <button class="plain guide flex-column gap-3"><svg width="17" height="17" viewBox="0 0 17 17"><circle cx="8.500" cy="8.500" r="8.500" fill="#6fd01a"/><path d="M6 10l2.500-3 2.500 3z" fill="#1659c2"/></svg><span>Заавар бичлэг</span></button>
    <button class="plain pdfbtn" aria-label="PDF"><svg width="20" height="24"><use href="#pdf"/></svg></button>
  </div>
</div>
<div class="scroller d-flex flex-column align-items-center">
  <svg width="12" height="15" viewBox="0 0 12 15"><path d="M6 1l5.500 8h-11z" fill="#8b8b8b"/></svg>
  <div class="thumb"></div><div class="rest"></div>
  <svg width="12" height="12" viewBox="0 0 12 12"><path d="M6 10L.500 2h11z" fill="#8b8b8b"/></svg>
</div>
</div>

<footer class="taskbar d-flex align-items-center">
  <div class="weather d-flex align-items-center">
    <div class="position-relative"><svg class="i30"><use href="#cloud"/></svg><span class="alertdot">1</span></div>
    <div><div>6°F</div><div class="text-secondary">Partly cloudy</div></div>
  </div>
  <div class="dock d-flex align-items-center justify-content-center">
    <button class="plain" aria-label="Start"><svg width="28" height="28"><use href="#win"/></svg></button>
    <label class="searchpill d-flex align-items-center"><svg class="i20"><use href="#lens"/></svg><input placeholder="Search" aria-label="Search"><svg class="ms-auto" width="22" height="30"><use href="#cupcake"/></svg></label>
    <button class="plain appbtn front" aria-label="Brave"><svg class="i30"><use href="#brave"/></svg></button>
    <button class="plain appbtn" aria-label="Edge"><svg class="i30"><use href="#edge"/></svg></button>
    <button class="plain appbtn idle" aria-label="Firefox"><svg class="i30"><use href="#fox"/></svg></button>
    <button class="plain appbtn idle" aria-label="Copilot"><svg class="i30"><use href="#copilot"/></svg></button>
    <button class="plain appbtn" aria-label="Files"><svg class="i30"><use href="#folder"/></svg></button>
    <button class="plain appbtn excel" aria-label="Excel"><svg class="i30" viewBox="0 0 30 30"><use href="#sheetbase"/><path d="M6 10l7 10M13 10L6 20" stroke="#fff" stroke-width="2.400"/></svg></button>
    <button class="plain appbtn word" aria-label="Word"><svg class="i30" viewBox="0 0 30 30"><use href="#sheetbase"/><path d="M4 11l2.500 9 3-8 3 8 2.500-9" fill="none" stroke="#fff" stroke-width="1.800"/></svg></button>
  </div>
  <div class="tray d-flex align-items-center justify-content-end">
    <span class="cell"><svg class="i16"><use href="#up"/></svg></span>
    <span class="cell"><svg class="i18"><use href="#viber"/></svg></span>
    <span class="cell"><svg class="i20"><use href="#people"/></svg></span>
    <span class="cell"><svg class="i22"><use href="#sync"/></svg></span>
    <span class="cell"><svg class="i20"><use href="#usb"/></svg></span>
    <span class="langtag">МОН</span>
    <svg class="i22 me-2"><use href="#monitor"/></svg><svg class="i20 muteico"><use href="#mute"/></svg>
    <div class="text-end"><div>6:50 PM</div><div>12/15/2025</div></div>
  </div>
</footer>
<script src="https://cdn.jsdelivr.net/npm/bootstrap@5.3.0/dist/js/bootstrap.bundle.min.js"></script>
<script>
// number, source, programme, decided, posted, items, total, editable
const U='Улсын төсөв';
const data=[
['I250923110013',U,'08610','2025-07-01','2025-09-23','2','427,940,000.00',1],
['I250923110006',U,'02910','2025-06-05','2025-09-23','1','149,000,000.00',1],
['I250923100045',U,'02620','2025-06-02','2025-09-23','1','31,550,561.00',1],
['I250923100035',U,'02620','2025-05-29','2025-09-23','1','26,606,000.00',1],
['I250923100023',U,'05210','2025-04-19','2025-09-23','2','6,100,000.00',1],
['I250922180017','Бусад байдлаар бий болсон хөрөнгө','','2025-02-04','2025-09-22','1','262,300.00',1],
['I250513120008',U,'35106','2024-12-30','2025-05-13','1','1,000,000.00',0],
['I250509150002',U,'06209','2024-12-30','2025-05-09','1','1,000,000.00',0],
['I250319160034',U,'05820','2024-05-01','2025-03-19','1','10,000,000.00',0],
['I250319130082',U,'04759','2024-10-16','2025-03-19','2','280,500.00',0]];
const act=(id,label)=>`<a href="#" aria-label="${label}"><svg class="i18"><use href="#${id}"/></svg></a>`;
document.getElementById('rows').innerHTML=data.map((r,i)=>`<tr class="${i===9?'hovered':''}"><td>${i+1}</td><td>${r[0]}</td><td>${r[1]}</td><td class="text-center">${r[2]}</td><td>${r[3]}</td><td>${r[4]}</td><td>${r[5]}</td><td>${r[6]}</td><td><div class="acts"><span class="slot">${r[7]?act('pen','Засах'):''}</span><span class="slot mid">${act('eye','Харах')}</span><span class="slot">${r[7]?act('bin','Устгах'):''}</span></div></td></tr>`).join('');
</script>
</body>
</html>
